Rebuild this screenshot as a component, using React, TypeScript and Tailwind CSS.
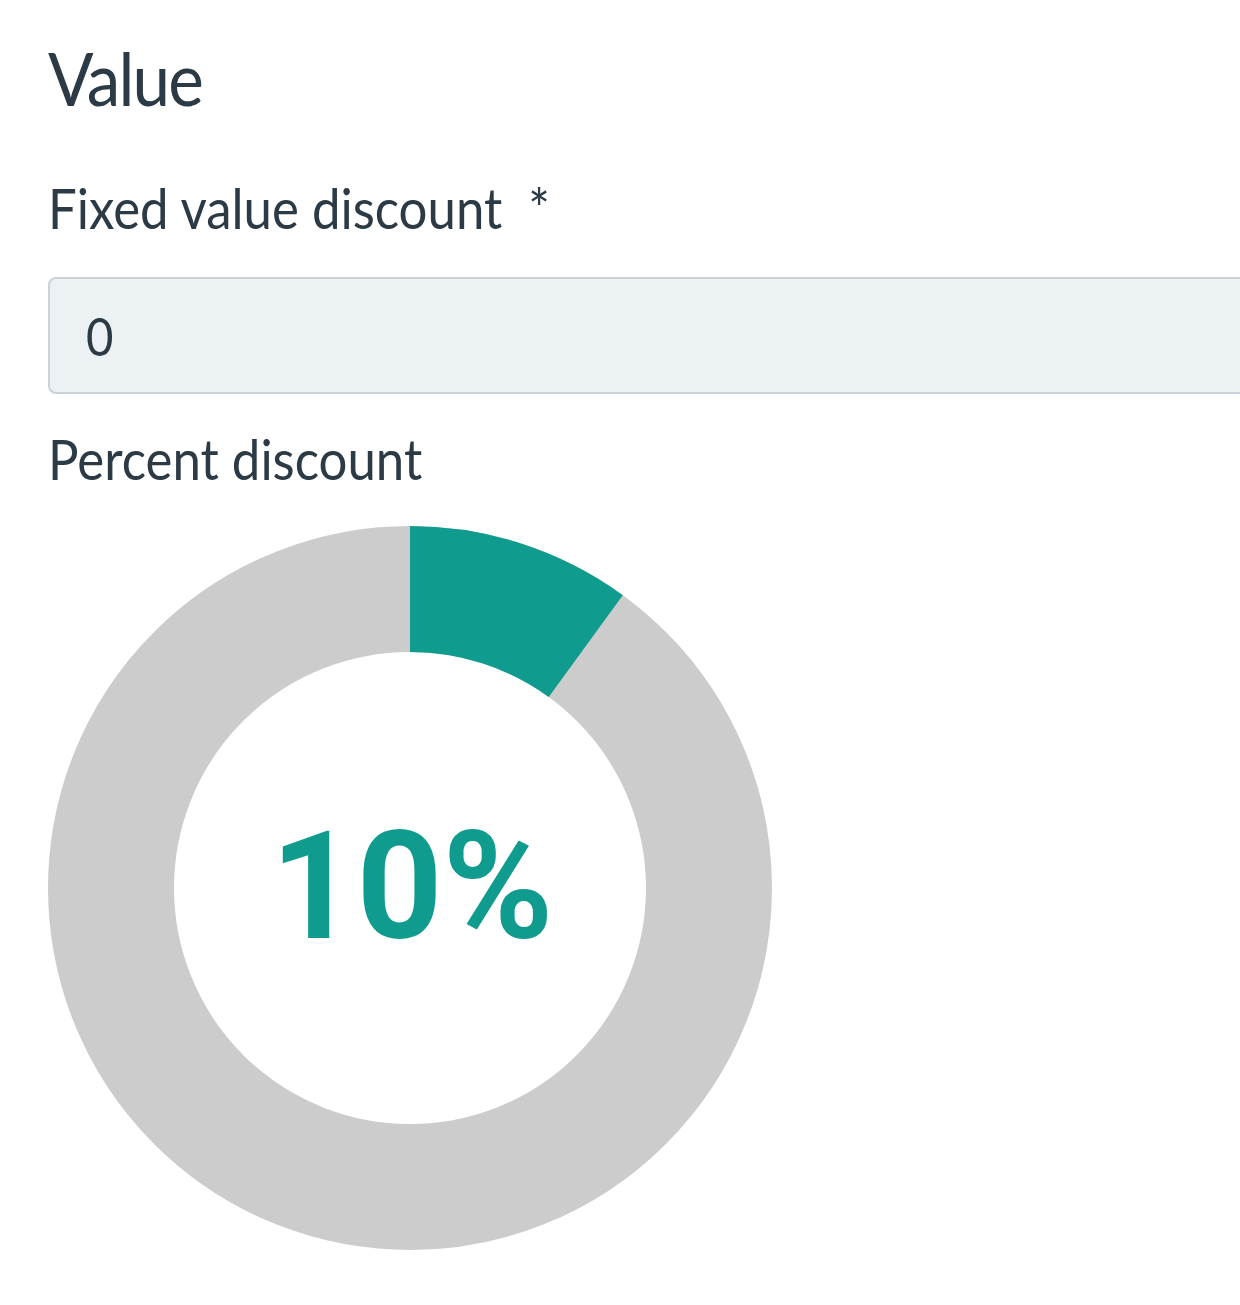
const R = 362;
const r = 236;
const pct = 10;

function Donut() {
  const a = (pct / 100) * Math.PI * 2;
  const ox = R + R * Math.sin(a);
  const oy = R - R * Math.cos(a);
  const ix = R + r * Math.sin(a);
  const iy = R - r * Math.cos(a);
  const seg = `M ${R} 0 A ${R} ${R} 0 0 1 ${ox} ${oy} L ${ix} ${iy} A ${r} ${r} 0 0 0 ${R} ${R - r} Z`;
  return (
    <svg width="724" height="724" viewBox="0 0 724 724" className="block">
      <circle cx={R} cy={R} r={(R + r) / 2} fill="none" stroke="#cccccc" strokeWidth={R - r} />
      <path d={seg} fill="#0f9b8e" />
      <text
        x={R + 2}
        y={412}
        textAnchor="middle"
        fontFamily="Roboto, sans-serif"
        fontWeight="bold"
        fontSize="150"
        fill="#0f9b8e"
      >
        {pct}%
      </text>
    </svg>
  );
}

export default function App() {
  return (
    <div className="w-[1240px] h-[1305px] overflow-hidden bg-white font-[family-name:Lato,sans-serif] text-[#2b3a44]">
      <div className="pl-12 pt-[38px]">
        <h2 className="text-[74px] leading-[80px] tracking-[-2px] scale-x-[0.91] origin-left">Value</h2>
        <label className="block mt-[58px] text-[56px] leading-[64px] scale-x-[0.91] origin-left">
          Fixed value discount&nbsp; *
        </label>
        <div className="mt-[37px] w-[1260px] h-[117px] rounded-[8px] border-2 border-[#c9d3d9] bg-[#ecf1f4] flex items-center pl-[36px]">
          <span className="text-[52px] scale-x-[0.91] origin-left">0</span>
        </div>
        <label className="block mt-[33px] text-[56px] leading-[64px] scale-x-[0.91] origin-left">
          Percent discount
        </label>
        <div className="mt-[35px]">
          <Donut />
        </div>
      </div>
    </div>
  );
}
